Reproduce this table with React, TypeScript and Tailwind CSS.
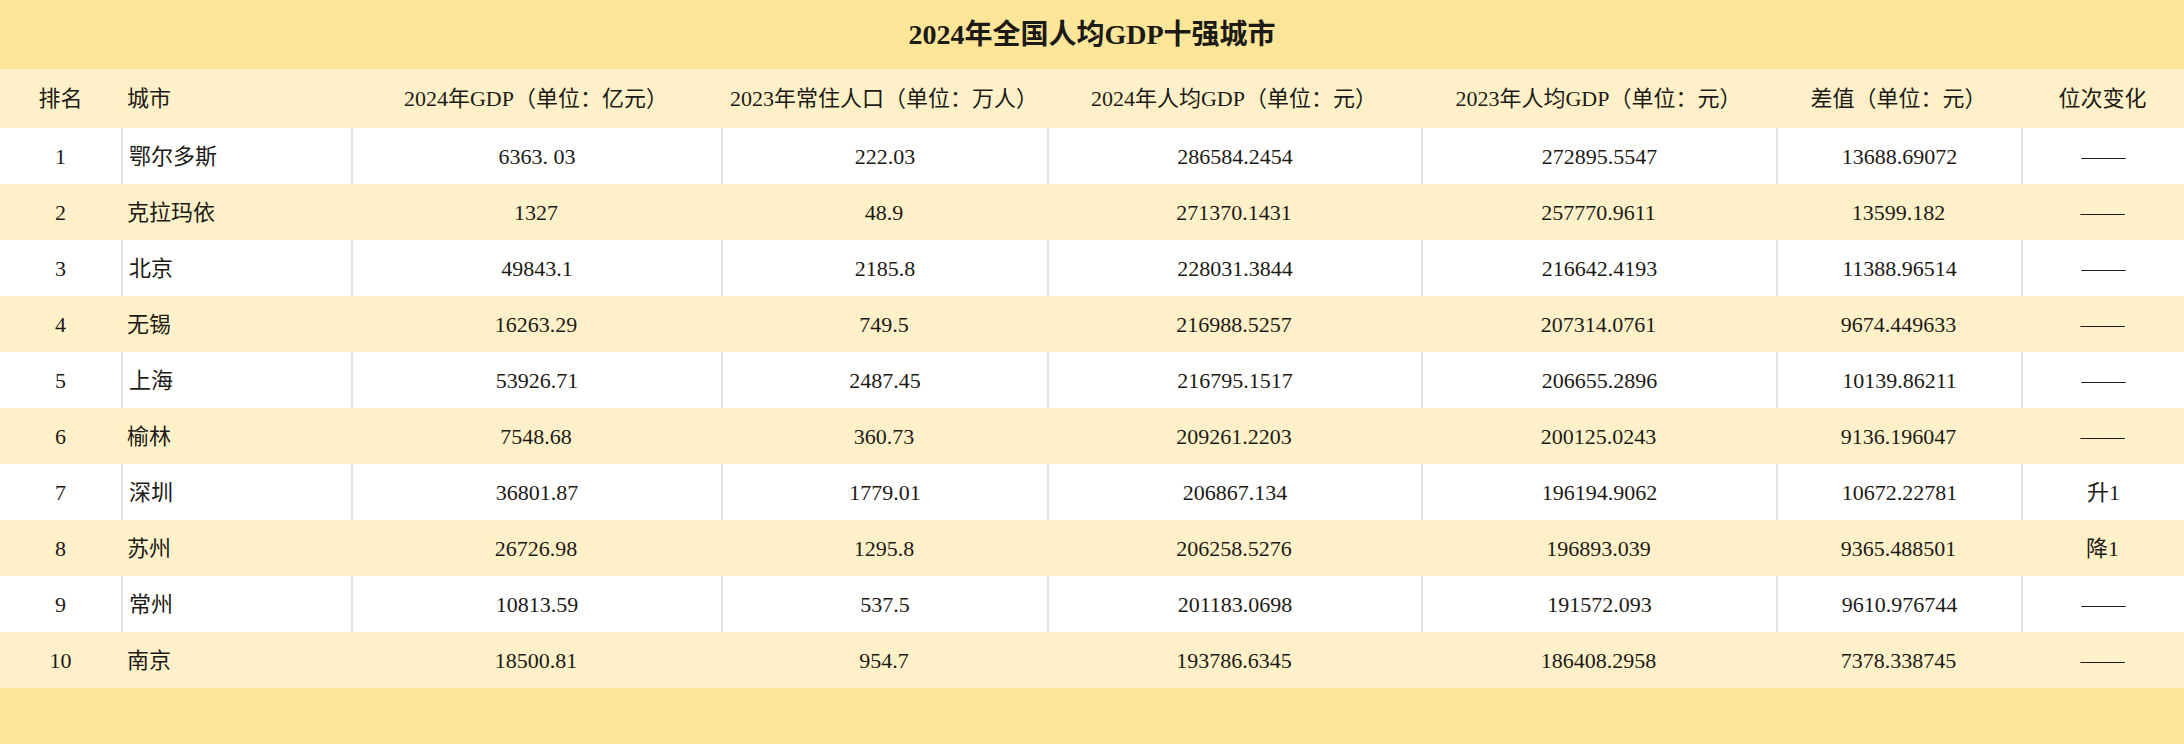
const rows = [
  ['1', '鄂尔多斯', '6363. 03', '222.03', '286584.2454', '272895.5547', '13688.69072', '——'],
  ['2', '克拉玛依', '1327', '48.9', '271370.1431', '257770.9611', '13599.182', '——'],
  ['3', '北京', '49843.1', '2185.8', '228031.3844', '216642.4193', '11388.96514', '——'],
  ['4', '无锡', '16263.29', '749.5', '216988.5257', '207314.0761', '9674.449633', '——'],
  ['5', '上海', '53926.71', '2487.45', '216795.1517', '206655.2896', '10139.86211', '——'],
  ['6', '榆林', '7548.68', '360.73', '209261.2203', '200125.0243', '9136.196047', '——'],
  ['7', '深圳', '36801.87', '1779.01', '206867.134', '196194.9062', '10672.22781', '升1'],
  ['8', '苏州', '26726.98', '1295.8', '206258.5276', '196893.039', '9365.488501', '降1'],
  ['9', '常州', '10813.59', '537.5', '201183.0698', '191572.093', '9610.976744', '——'],
  ['10', '南京', '18500.81', '954.7', '193786.6345', '186408.2958', '7378.338745', '——'],
]

const headers = [
  '排名',
  '城市',
  '2024年GDP（单位：亿元）',
  '2023年常住人口（单位：万人）',
  '2024年人均GDP（单位：元）',
  '2023年人均GDP（单位：元）',
  '差值（单位：元）',
  '位次变化',
]

const grid = 'grid grid-cols-[121px_230px_370px_326px_374px_355px_245px_163px]'

export default function App() {
  return (
    <div
      className="w-[2184px] h-[744px] bg-[#fde69a] text-[22px] text-[#1c1a14]"
      style={{ fontFamily: '"Liberation Serif", "Noto Sans CJK SC", serif' }}
    >
      {/* Title */}
      <div className="h-[69px] flex items-center justify-center text-[28px] font-bold">
        2024年全国人均GDP十强城市
      </div>

      {/* Header */}
      <div className={`${grid} h-[59px] bg-[#fef1c9] items-center`}>
        {headers.map((h, i) => (
          <div key={i} className={i === 1 ? 'pl-[6px]' : 'text-center'}>
            {h}
          </div>
        ))}
      </div>

      {/* Body */}
      {rows.map((row, r) => {
        const white = r % 2 === 0
        return (
          <div key={r} className={`${grid} h-[56px] ${white ? 'bg-white' : 'bg-[#fef1c9]'}`}>
            {row.map((cell, i) => (
              <div
                key={i}
                className={`flex items-center ${i === 1 ? 'pl-[6px]' : 'justify-center'} ${
                  white && i > 0 ? 'border-l-2 border-[#e2e2e2]' : ''
                }`}
              >
                {cell}
              </div>
            ))}
          </div>
        )
      })}

      {/* Footer with faint watermark */}
      <div className="h-[56px] flex items-center justify-center">
        <div className="w-[507px] h-[35px] ml-[-96px] border border-[#fbe192] rounded-sm" />
      </div>
    </div>
  )
}
